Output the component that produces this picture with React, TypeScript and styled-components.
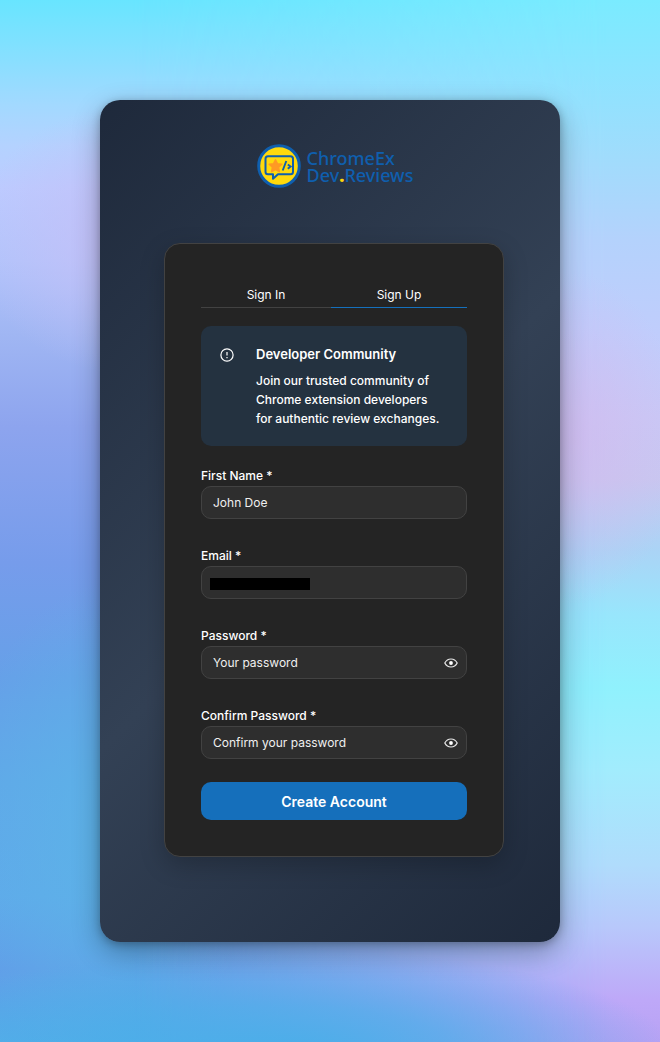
import React from "react";
import styled, { createGlobalStyle } from "styled-components";

const GlobalStyle = createGlobalStyle`
  *, *::before, *::after { box-sizing: border-box; }
  body {
    margin: 0;
    font-family: Inter, "Liberation Sans", sans-serif;
    font-size: 12px;
    color: #fff;
  }
  button, input { font: inherit; color: inherit; }
`;

const Page = styled.main`
  position: relative;
  min-height: 100vh;
  padding: 100px;
  background:
    radial-gradient(ellipse 22% 24% at 16% 80%, #5db2e8 0%, #5db2e800 100%),
    radial-gradient(ellipse 24% 13% at 20% 23%, #c4c0f8 0%, #c4c0f800 100%),
    linear-gradient(
      to bottom,
      #68e5ff 0%, #84e0ff 5%, #a2d9ff 10%, #b4d2ff 14%, #bccbff 18%, #b2c4fb 25%, #a0b6f3 32%,
      #8da4ee 41%, #769ceb 54%, #66a0e8 65%, #60a8e8 75%, #5faaea 86%, #619ee8 93%, #56ace8 100%
    );

  &::before {
    content: "";
    position: absolute;
    inset: 0;
    background: linear-gradient(
      to bottom,
      #7aebff 0%, #8ce4ff 7%, #a0dcfc 15%, #b4d2fc 23%, #c0cdfc 32%, #c9c8f6 40%, #c8c7f0 46%,
      #aad4f6 53%, #98e6fc 59%, #90f1fd 66%, #a2ecfd 74%, #b0dcfc 83%, #b8c8fb 89%, #bea8f8 96%, #b8a2f4 100%
    );
    mask-image: linear-gradient(to right, transparent 20%, #000 92%);
  }

  &::after {
    content: "";
    position: absolute;
    inset: 0;
    background:
      radial-gradient(ellipse 16% 16% at 87% 42%, #d2baeeb0 0%, #d2baee00 100%),
      radial-gradient(ellipse 60% 10% at 42% 101%, #4aaee9 0%, #4aaee9aa 45%, #4aaee900 100%);
  }
`;

const Card = styled.section`
  position: relative;
  z-index: 1;
  display: flex;
  flex-direction: column;
  gap: 55px;
  padding: 44px 56px 85px 64px;
  border-radius: 20px;
  background: linear-gradient(135deg, #1e293b 0%, #334155 50%, #1e293b 100%);
  box-shadow: 0 10px 28px rgba(0, 0, 0, 0.3), 0 2px 8px rgba(0, 0, 0, 0.25);
`;

const Brand = styled.h1`
  display: flex;
  justify-content: center;
  align-items: center;
  gap: 6px;
  margin: 0;
  padding-left: 2px;
  font: 500 18px/17px "Noto Sans", "Open Sans", sans-serif;
  color: #0f5fae;
`;

const Wordmark = styled.span`
  padding-top: 2px;
`;

const Dot = styled.span`
  color: #ffd60a;
  font-weight: 900;
`;

const Panel = styled.div`
  padding: 36px;
  border: 1px solid #424242;
  border-radius: 16px;
  background: #242424;
  box-shadow: 0 8px 24px rgba(0, 0, 0, 0.22);
`;

const Tabs = styled.div`
  display: flex;
  margin-bottom: 18px;
`;

const Tab = styled.button<{ $active?: boolean }>`
  flex: ${(p) => (p.$active ? "136 0 0" : "130 0 0")};
  height: 28px;
  padding: 2px 0 0;
  border: 0;
  border-bottom: 1px solid ${(p) => (p.$active ? "#1570bc" : "#424242")};
  background: none;
`;

const Notice = styled.aside`
  display: flex;
  gap: 22px;
  padding: 19px 24px 18px 19px;
  margin-bottom: 20px;
  border-radius: 10px;
  background: #243240;
  line-height: 19px;
  font-weight: 500;
`;

const NoticeIcon = styled.svg`
  flex: none;
  width: 14px;
  height: 14px;
  margin-top: 3px;
`;

const NoticeText = styled.p`
  margin: 0;
`;

const NoticeTitle = styled.h2`
  margin: 0 0 7px;
  font-size: 13px;
  font-weight: 600;
  line-height: 19px;
`;

const Form = styled.form`
  display: flex;
  flex-direction: column;
  gap: 23px;
`;

const Fields = styled.div`
  display: flex;
  flex-direction: column;
  gap: 27px;
`;

const Field = styled.div`
  display: flex;
  flex-direction: column;
`;

const Label = styled.label`
  font-weight: 500;
  line-height: 20px;
`;

const Control = styled.div`
  position: relative;
  display: flex;
`;

const Input = styled.input`
  width: 100%;
  height: 33px;
  padding: 0 11px;
  border: 1px solid #424242;
  border-radius: 10px;
  background: #2e2e2e;
  outline: none;

  &::placeholder { color: #f0f0f0; opacity: 1; }
`;

const Redaction = styled.span`
  position: absolute;
  left: 9px;
  bottom: 9px;
  width: 100px;
  height: 12px;
  background: #000;
`;

const Reveal = styled.button`
  position: absolute;
  top: 0;
  right: 9px;
  display: flex;
  align-items: center;
  height: 33px;
  padding: 0;
  border: 0;
  background: none;
`;

const Submit = styled.button`
  height: 38px;
  border: 0;
  border-radius: 10px;
  background: #156fbb;
  font-size: 14px;
  font-weight: 600;
`;

const Logo = () => (
  <svg width="44" height="44" viewBox="0 0 44 44" aria-hidden="true">
    <circle cx="22" cy="22" r="20.3" fill="#ffd90c" stroke="#0f5fae" strokeWidth="3" />
    <path
      d="M11 12.300h22.500a2.500 2.500 0 0 1 2.500 2.500v13a2.500 2.500 0 0 1-2.500 2.500H21l-5 4.500v-4.500h-5a2.500 2.500 0 0 1-2.500-2.500v-13a2.500 2.500 0 0 1 2.500-2.500z"
      fill="none"
      stroke="#0f5fae"
      strokeWidth="2"
      strokeLinejoin="round"
    />
    <path
      d="M18.500 15.800l1.900 3.900 4.400.6-3.200 3 .8 4.400-3.900-2.100-3.900 2.100.8-4.400-3.200-3 4.400-.6z"
      fill="#ff9a24"
      stroke="#ff9a24"
      strokeWidth="1.500"
      strokeLinejoin="round"
    />
    <path d="M29.300 17l-3.600 9.500M30.800 20.500l2.800 2-2.800 2.300" fill="none" stroke="#0f5fae" strokeWidth="1.900" />
  </svg>
);

const Eye = () => (
  <svg width="14" height="10" viewBox="0 0 14 10" fill="none" aria-hidden="true">
    <path d="M.8 5C2.200 2.300 4.400 1 7 1s4.800 1.300 6.200 4C11.800 7.700 9.600 9 7 9S2.200 7.700.8 5z" stroke="#e8e8e8" strokeWidth="1.200" />
    <circle cx="7" cy="5" r="1.900" fill="#fff" />
  </svg>
);

type FieldProps = {
  id: string;
  label: string;
  type?: string;
  placeholder?: string;
  redacted?: boolean;
};

function TextField({ id, label, type = "text", placeholder, redacted }: FieldProps) {
  return (
    <Field>
      <Label htmlFor={id}>{label} *</Label>
      <Control>
        <Input id={id} type={type} placeholder={placeholder} />
        {redacted && <Redaction />}
        {type === "password" && (
          <Reveal type="button" aria-label={`Show ${label}`}>
            <Eye />
          </Reveal>
        )}
      </Control>
    </Field>
  );
}

export default function App() {
  return (
    <>
      <GlobalStyle />
      <Page>
        <Card>
          <Brand>
            <Logo />
            <Wordmark>
              ChromeEx
              <br />
              Dev<Dot>.</Dot>Reviews
            </Wordmark>
          </Brand>
          <Panel>
            <Tabs role="tablist">
              <Tab type="button" role="tab" aria-selected={false}>Sign In</Tab>
              <Tab type="button" role="tab" aria-selected $active>Sign Up</Tab>
            </Tabs>
            <Notice>
              <NoticeIcon viewBox="0 0 14 14" fill="none" stroke="#fff" aria-hidden="true">
                <circle cx="7" cy="7" r="6.100" strokeWidth="1.200" />
                <path d="M7 4v3.500M7 9v1.200" strokeWidth="1.200" />
              </NoticeIcon>
              <div>
                <NoticeTitle>Developer Community</NoticeTitle>
                <NoticeText>Join our trusted community of Chrome extension developers for authentic review exchanges.</NoticeText>
              </div>
            </Notice>
            <Form onSubmit={(e) => e.preventDefault()}>
              <Fields>
                <TextField id="first-name" label="First Name" placeholder="John Doe" />
                <TextField id="email" label="Email" type="email" redacted />
                <TextField id="password" label="Password" type="password" placeholder="Your password" />
                <TextField id="confirm" label="Confirm Password" type="password" placeholder="Confirm your password" />
              </Fields>
              <Submit type="submit">Create Account</Submit>
            </Form>
          </Panel>
        </Card>
      </Page>
    </>
  );
}
